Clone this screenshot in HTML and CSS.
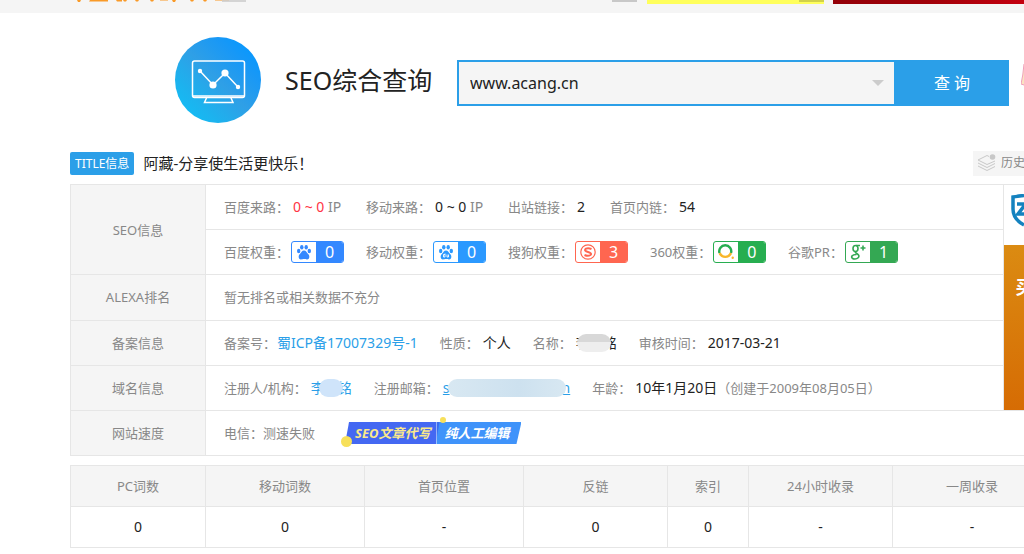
FILE: index.html
```html
<!DOCTYPE html>
<html lang="zh-CN">
<head>
<meta charset="utf-8">
<meta name="viewport" content="width=device-width, initial-scale=1">
<title>SEO综合查询</title>
<link rel="stylesheet" href="styles.css">
</head>
<body>
<div class="topbar">
  <svg class="promo-marks" viewBox="0 0 169 4" aria-hidden="true">
    <g fill="#f99a28">
      <path d="M0 0h4l-1 2H1zM13 0h18v1.500H12zM39 0h6v1.500h-5zM46 0h4l-1 1.500h-2zM58 0h4l-1 1.500h-2zM73 0h4l-1 1.500h-2zM95 0h4l-1 2h-2zM113 0h4l-1 1.500h-2zM126 0h4l-1 1.500h-2z"/>
      <path d="M83 0h8v1h-8zM138 0h14v1h-14z" opacity="0.5"/>
    </g>
    <path d="M145 0h24v2h-24z" fill="#ccc" opacity="0.8"/>
  </svg>
  <div class="promo promo-plain"></div>
  <div class="promo promo-yellow"></div>
  <div class="promo-red"></div>
</div>

<header class="search">
  <svg class="logo" viewBox="0 0 86 86" aria-hidden="true">
    <defs>
      <linearGradient id="disc" x1="0.1" y1="0.9" x2="0.9" y2="0.1">
        <stop offset="0" stop-color="#13bdf5"/>
        <stop offset="0.2" stop-color="#1db2ee"/>
        <stop offset="0.5" stop-color="#2f9fe6"/>
        <stop offset="0.8" stop-color="#1898f6"/>
        <stop offset="1" stop-color="#0598ff"/>
      </linearGradient>
    </defs>
    <circle cx="43" cy="43" r="43" fill="url(#disc)"/>
    <g fill="none" stroke="#fff" stroke-width="1.5">
      <rect x="17.500" y="24" width="52" height="36.500" rx="2"/>
      <path d="M18 59H69M31.500 61l-2 4.500h28.500l-2-4.500"/>
      <path d="M25 34l13 14 12-12 13 14"/>
    </g>
    <g fill="#fff">
      <circle cx="25" cy="34" r="2.200"/>
      <circle cx="38" cy="48" r="3.600"/>
      <circle cx="50" cy="36" r="3.600"/>
      <circle cx="63" cy="50" r="2.200"/>
    </g>
  </svg>
  <h1 class="heading">SEO综合查询</h1>
  <form class="search-form">
    <div class="search-box">
      <input class="search-input" type="text" value="www.acang.cn" aria-label="域名">
      <svg class="caret" viewBox="0 0 12 6" aria-hidden="true"><path d="M0 0h12L6 6z" fill="#ccc"/></svg>
    </div>
    <button class="search-button" type="button">查 询</button>
  </form>
  <svg class="side-mark" viewBox="0 0 3 24" aria-hidden="true"><path d="M3 0Q2 12 0 20l3 1" fill="#fbe3c0" stroke="#ef9fba"/></svg>
</header>

<main class="content">
  <div class="site-title">
    <span class="title-badge">TITLE信息</span>
    <h2 class="title-text">阿藏-分享使生活更快乐！</h2>
    <a class="history" href="#">
      <svg class="layers" viewBox="0 0 20 18" aria-hidden="true">
        <g fill="none" stroke="#c8c8c8">
          <path d="M12 2.500L10 1.500 1 6l9 4.500L18 7M1 9l9 4.500L18 9.500M1 12l9 4.500 8-4"/>
        </g>
        <circle cx="15.500" cy="3" r="2.800" fill="#c8c8c8"/>
      </svg>
      <span>历史</span>
    </a>
  </div>

  <table class="info">
    <tbody>
      <tr>
        <th scope="row" rowspan="2">SEO信息</th>
        <td>
          <div class="fields columns">
            <div class="field"><span>百度来路：</span><span class="value"><span class="hot">0 ~ 0</span> <span class="unit">IP</span></span></div>
            <div class="field"><span>移动来路：</span><span class="value">0 ~ 0 <span class="unit">IP</span></span></div>
            <div class="field field-short"><span>出站链接：</span><span class="value">2</span></div>
            <div class="field"><span>首页内链：</span><span class="value">54</span></div>
          </div>
        </td>
        <td class="ad" rowspan="5">
          <div class="ad-body">
            <div class="ad-top">
              <svg class="shield" viewBox="0 0 13 33" aria-hidden="true"><path d="M13 1.500Q7 2 2 3V15q0 10 11 16" fill="none" stroke="#1482bf" stroke-width="3.500"/><path d="M6 10h7M13 12L7 20h6" fill="none" stroke="#1482bf" stroke-width="3.500"/></svg>
            </div>
            <div class="ad-main">买</div>
          </div>
        </td>
      </tr>
      <tr>
        <td>
          <div class="fields columns">
            <div class="field"><span>百度权重：</span>
              <a class="rank rank-baidu" href="#"><svg viewBox="0 0 16 16" aria-hidden="true"><g fill="currentColor"><ellipse cx="2.700" cy="7" rx="1.700" ry="2.200"/><ellipse cx="5.800" cy="3.300" rx="1.700" ry="2.300"/><ellipse cx="10.200" cy="3.300" rx="1.700" ry="2.300"/><ellipse cx="13.300" cy="7" rx="1.700" ry="2.200"/><path d="M8 6.500c2.200 0 2.700 2.200 4.200 3.500 2 1.800 1.300 5.500-1.200 5.500-1.300 0-1.700-.4-3-.4s-1.700.4-3 .4c-2.500 0-3.200-3.700-1.200-5.500C5.300 8.700 5.800 6.500 8 6.500z"/></g></svg><b>0</b></a></div>
            <div class="field"><span>移动权重：</span>
              <a class="rank rank-mobile" href="#"><svg viewBox="0 0 16 16" aria-hidden="true"><g fill="currentColor"><ellipse cx="2.700" cy="7" rx="1.700" ry="2.200"/><ellipse cx="5.800" cy="3.300" rx="1.700" ry="2.300"/><ellipse cx="10.200" cy="3.300" rx="1.700" ry="2.300"/><ellipse cx="13.300" cy="7" rx="1.700" ry="2.200"/><path d="M8 6.500c2.200 0 2.700 2.200 4.200 3.500 2 1.800 1.300 5.500-1.200 5.500-1.300 0-1.700-.4-3-.4s-1.700.4-3 .4c-2.500 0-3.200-3.700-1.200-5.500C5.300 8.700 5.800 6.500 8 6.500z"/></g><path d="M7 10.500H5.500v2.500H7V9.500M9 10.500V13h1.500v-2.500" fill="none" stroke="#fff" stroke-width="0.900"/></svg><b>0</b></a></div>
            <div class="field"><span>搜狗权重：</span>
              <a class="rank rank-sogou" href="#"><svg viewBox="0 0 16 16" aria-hidden="true"><circle cx="8" cy="8" r="7.200" fill="none" stroke="currentColor" stroke-width="1.200"/><path d="M11.500 5Q8 3.500 6 4.700C4 6 5.500 7.400 8 8s4 1.900 2.500 3Q8 12.500 4.500 11" fill="none" stroke="currentColor" stroke-width="2"/></svg><b>3</b></a></div>
            <div class="field field-tight"><span>360权重：</span>
              <a class="rank rank-360" href="#"><svg viewBox="0 0 16 16" aria-hidden="true"><path d="M1.500 9A6 6 0 1 1 13 9" fill="none" stroke="#27ae50" stroke-width="2.400"/><path d="M1.700 9a6 6 0 0 0 11.200 0" fill="none" stroke="#f8b62b" stroke-width="2.400"/><circle cx="14.700" cy="13.800" r="1.200" fill="#f8b62b"/></svg><b>0</b></a></div>
            <div class="field"><span>谷歌PR：</span>
              <a class="rank rank-google" href="#"><svg viewBox="0 0 16 16" aria-hidden="true"><g fill="none" stroke="currentColor" stroke-width="1.600"><ellipse cx="5.500" cy="4.500" rx="2.500" ry="3"/><path d="M6 1.500h4M6 7.500c-2 1 1.500 2 2.500 3.500 1.300 2-1 4-3.500 4s-4-1.500-3-3 3-1.500 4.500-1.500M13 1.500v5M10.500 4h5"/></g></svg><b>1</b></a></div>
          </div>
        </td>
      </tr>
      <tr>
        <th scope="row">ALEXA排名</th>
        <td>暂无排名或相关数据不充分</td>
      </tr>
      <tr>
        <th scope="row">备案信息</th>
        <td>
          <div class="fields">
            <div class="field"><span>备案号：</span><a class="value value-near" href="#">蜀ICP备17007329号-1</a></div>
            <div class="field"><span>性质：</span><span class="value">个人</span></div>
            <div class="field"><span>名称：</span><span class="value masked">李<span class="mask mask-grey"></span>铭</span></div>
            <div class="field"><span>审核时间：</span><span class="value">2017-03-21</span></div>
          </div>
        </td>
      </tr>
      <tr>
        <th scope="row">域名信息</th>
        <td>
          <div class="fields">
            <div class="field"><span>注册人/机构：</span><a class="value masked" href="#">李<span class="mask mask-blue"></span>铭</a></div>
            <div class="field"><span>注册邮箱：</span><a class="value masked mail" href="#">s<span class="mask mask-mail"></span>n</a></div>
            <div class="field"><span>年龄：</span><span class="value">10年1月20日</span><span class="note">（创建于2009年08月05日）</span></div>
          </div>
        </td>
      </tr>
      <tr>
        <th scope="row">网站速度</th>
        <td colspan="2">
          <div class="fields">
            <div class="field">电信：测速失败</div>
            <a class="banner" href="#"><span class="banner-left">SEO文章代写</span><span class="banner-right">纯人工编辑</span></a>
          </div>
        </td>
      </tr>
    </tbody>
  </table>

  <table class="stats">
    <colgroup><col class="c-pc"><col class="c-wide"><col class="c-wide"><col class="c-mid"><col class="c-narrow"><col class="c-mid"><col></colgroup>
    <thead>
      <tr><th scope="col">PC词数</th><th scope="col">移动词数</th><th scope="col">首页位置</th><th scope="col">反链</th><th scope="col">索引</th><th scope="col">24小时收录</th><th scope="col">一周收录</th></tr>
    </thead>
    <tbody>
      <tr><td>0</td><td>0</td><td>-</td><td>0</td><td>0</td><td>-</td><td>-</td></tr>
    </tbody>
  </table>
</main>
</body>
</html>
```
FILE: styles.css
```css
* { box-sizing: border-box; }
body {
  margin: 0;
  overflow: hidden;
  background: #fff;
  color: #888;
  font: 13px/20px "Noto Sans", "Noto Sans CJK SC", sans-serif;
}
a { color: #2b9fe8; text-decoration: none; }

.topbar {
  display: flex;
  height: 13px;
  padding-left: 77px;
  background: #f5f5f5;
}
.promo-marks { flex: none; width: 169px; height: 4px; }
.promo { display: flex; flex: none; justify-content: flex-end; height: 4px; }
.promo::after {
  content: "";
  width: 25px;
  height: 2px;
  background: rgba(0, 0, 0, 0.18);
}
.promo-plain { width: 391px; }
.promo-yellow { width: 177px; margin: 0 9px 0 10px; background: #ffff5c; }
.promo-red { flex: 1; height: 4px; background: linear-gradient(90deg, #930008, #a00008 50%, #c4000f); }

.search {
  display: flex;
  align-items: center;
  height: 134px;
  padding-left: 175px;
}
.logo { flex: none; width: 86px; height: 86px; }
.heading {
  flex: none;
  width: 172px;
  margin: 0;
  padding-left: 24px;
  color: #222;
  font-size: 25px;
  font-weight: normal;
  line-height: 36px;
  white-space: nowrap;
}
.search-form { display: flex; flex: 1; height: 46px; margin: 6px 12px 0 24px; }
.search-box {
  display: flex;
  flex: 1;
  align-items: center;
  padding-right: 10px;
  background: #f5f5f5;
  border: 2px solid #2b9fe8;
  border-right-width: 1px;
}
.search-input {
  flex: 1;
  min-width: 0;
  padding: 0 11px;
  border: 0;
  outline: 0;
  background: none;
  color: #222;
  font: inherit;
  font-size: 16px;
}
.caret { width: 12px; height: 6px; }
.search-button {
  flex: none;
  width: 114px;
  padding: 0;
  border: 0;
  background: #2b9fe8;
  color: #fff;
  font: inherit;
  font-size: 16px;
}
.side-mark { flex: none; width: 3px; height: 24px; margin-bottom: 8px; }

.content { padding-left: 70px; }
.site-title { display: flex; align-items: center; height: 32px; }
.title-badge {
  padding: 0 5px;
  background: #2b9fe8;
  border-radius: 2px;
  color: #fff;
  font-size: 12px;
  line-height: 23px;
}
.title-text {
  flex: 1;
  margin: 0 0 0 9px;
  color: #222;
  font-size: 15px;
  font-weight: normal;
}
.history {
  display: flex;
  gap: 4px;
  flex: none;
  align-items: center;
  width: 51px;
  height: 25px;
  padding-left: 4px;
  overflow: hidden;
  background: #f5f5f5;
  color: #888;
  font-size: 12px;
  white-space: nowrap;
}
.layers { flex: none; width: 20px; height: 18px; }

.info, .stats { width: 100%; border-collapse: collapse; table-layout: fixed; }
.info { margin-top: 5px; }
.info th, .info td { height: 45px; padding: 0; border: 1px solid #e6e6e6; font-weight: normal; }
.info th { width: 135px; background: #f5f5f5; }
.info td { padding-left: 18px; white-space: nowrap; }
.info td[colspan] { border-right: 0; }
.info .ad { width: 21px; height: 100%; padding: 0; border-right: 0; vertical-align: top; }
.ad-body { display: flex; flex-direction: column; height: 225px; overflow: hidden; }
.ad-top { height: 60px; padding: 9px 0 0 7px; }
.shield { display: block; width: 13px; height: 33px; }
.ad-main {
  flex: 1;
  padding: 30px 0 0 12px;
  background: linear-gradient(#db8b12, #d66c04);
  color: #fff;
  font-size: 18px;
  font-weight: bold;
  line-height: 24px;
}

.fields { display: flex; align-items: center; gap: 22px; }
.columns { gap: 0; }
.field { display: flex; align-items: center; }
.columns .field { min-width: 142px; }
.columns .field-short { min-width: 102px; }
.columns .field-tight { min-width: 138px; }
.value { margin-left: 4px; color: #222; font-size: 14px; }
.value-near { margin-left: 1px; }
a.value { color: #2b9fe8; }
.hot { color: #ff3344; }
.unit { color: #888; }

.rank {
  display: flex;
  width: 53px;
  height: 22px;
  margin-left: 2px;
  border: 1px solid;
  border-radius: 3px;
  overflow: hidden;
}
.rank svg { width: 16px; height: 16px; margin: 2px 4px; }
.rank b {
  flex: 1;
  background: currentColor;
  font-size: 16px;
  font-weight: normal;
  line-height: 20px;
  text-align: center;
}
.rank b::first-letter { color: #fff; }
.rank-baidu { color: #3388ff; }
.rank-mobile { color: #2b99ff; }
.rank-sogou { color: #ff6650; }
.rank-360 { color: #27ae50; }
.rank-google { color: #34a853; }

.masked { display: flex; align-items: center; }
.mask { position: relative; z-index: 1; height: 18px; border-radius: 9px; }
.mask-grey { width: 34px; margin: 0 -8px 0 -13px; background: linear-gradient(#d8d8d8 45%, #eee 45%); }
.mask-blue { width: 24px; margin: 0 -5px 0 -6px; background: #cfe4fa; }
.mask-mail { width: 118px; margin: 0 -4px 0 -2px; background: linear-gradient(90deg, #d8e8f2, #cde1ef 60%, #d8e8f2); }
.mail { text-decoration: underline; }

.banner {
  position: relative;
  display: flex;
  margin-left: 8px;
  font-size: 13px;
  font-style: italic;
  font-weight: bold;
  line-height: 22px;
}
.banner-left {
  padding: 0 6px 0 10px;
  background: #4468f2;
  color: #fbe98a;
  clip-path: polygon(4px 0, 100% 0, 100% 100%, 0 100%);
}
.banner-right {
  padding: 0 12px 0 8px;
  background: linear-gradient(100deg, #3a6cf0 3px, #3f93fa 4px);
  color: #fff;
  clip-path: polygon(0 0, 100% 0, calc(100% - 5px) 100%, 0 100%);
}
.banner::before, .banner::after {
  content: "";
  position: absolute;
  z-index: 1;
  border-radius: 50%;
  background: #f7e05a;
}
.banner::before { left: -4px; bottom: -3px; width: 11px; height: 11px; }
.banner::after { left: 95px; top: -5px; width: 6px; height: 6px; }

.stats { width: calc(100% + 28px); margin-top: 9px; text-align: center; }
.stats th, .stats td { height: 41px; padding: 0; border: 1px solid #e6e6e6; font-weight: normal; }
.stats th { background: #f5f5f5; }
.stats td { color: #222; font-size: 14px; }
.c-pc { width: 135px; }
.c-wide { width: 159px; }
.c-mid { width: 144px; }
.c-narrow { width: 81px; }
```
